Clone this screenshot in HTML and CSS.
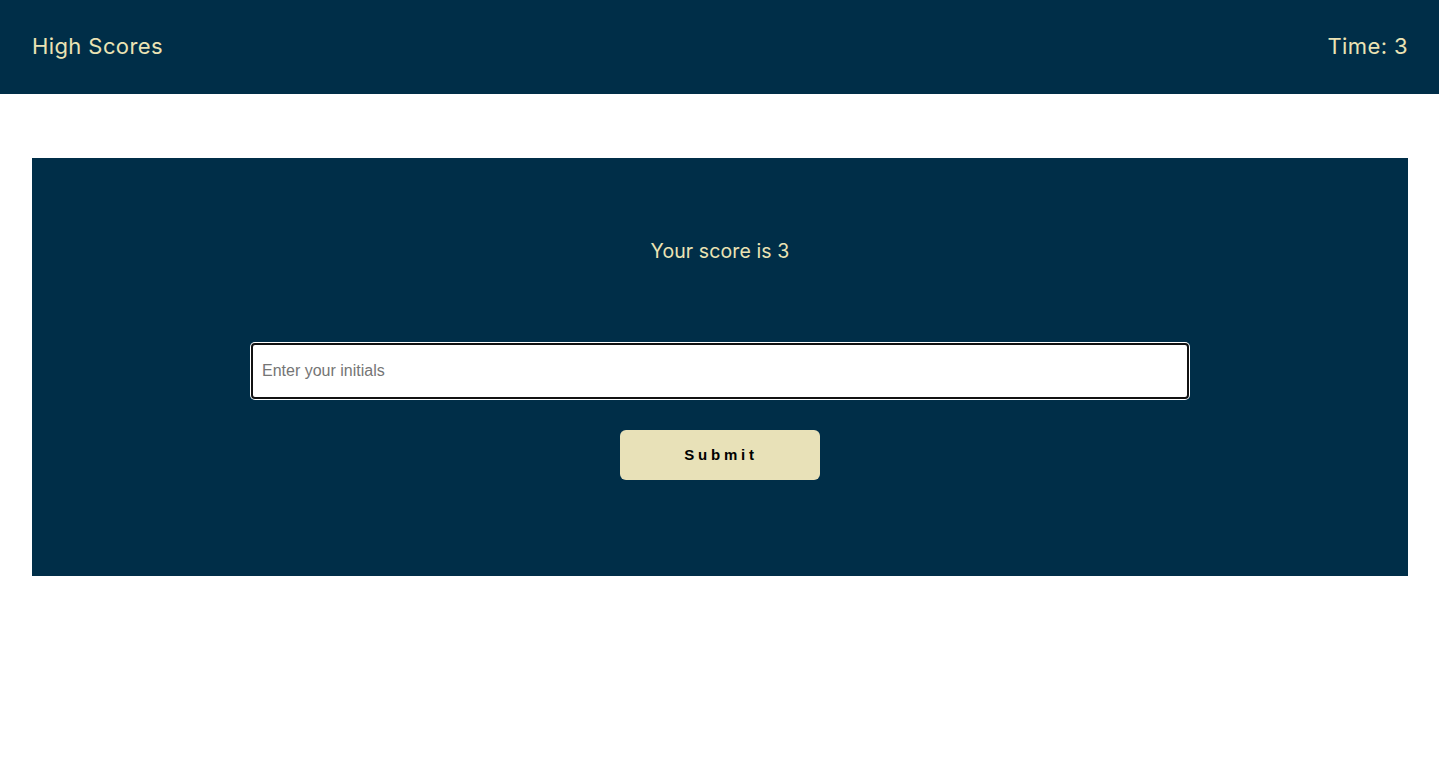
FILE: index.html
```html
<!DOCTYPE html>
<html>
<head>
<meta charset="utf-8">
<link rel="stylesheet" href="styles.css">
</head>
<body>
<header class="topbar">
  <a class="topbar__link" href="#">High Scores</a>
  <span class="topbar__time">Time: 3</span>
</header>
<main class="page">
  <section class="card">
    <p class="card__score">Your score is 3</p>
    <form class="card__form">
      <input class="card__input" type="text" placeholder="Enter your initials" autofocus>
      <button class="card__button" type="button">Submit</button>
    </form>
  </section>
</main>
</body>
</html>
```
FILE: styles.css
```css
* { box-sizing: border-box; }
html, body { margin: 0; padding: 0; background: #fff; }
body { font-family: "Inter", "Open Sans", sans-serif; }

.topbar {
  height: 94px;
  background: #002e48;
  display: flex;
  align-items: center;
  justify-content: space-between;
  padding: 0 31px 2px 32px;
  color: #ebe3b4;
  font-size: 22px;
  letter-spacing: 0.4px;
}
.topbar__link { color: #ebe3b4; text-decoration: none; }
.topbar__time { color: #ebe3b4; }

.page { padding: 64px 31px 0 32px; }

.card {
  background: #002e48;
  height: 418px;
  display: flex;
  flex-direction: column;
  align-items: center;
  padding-top: 80px;
}
.card__score {
  margin: 0;
  color: #ebe3b4;
  font-size: 19.5px;
  line-height: 26px;
  letter-spacing: 0.1px;
}
.card__form {
  width: 100%;
  display: flex;
  flex-direction: column;
  align-items: center;
  margin-top: 79px;
}
.card__input {
  width: 938px;
  height: 56px;
  border: 2px solid #111;
  border-radius: 4px;
  box-shadow: 0 0 0 1px #fff;
  outline: none;
  background: #fff;
  padding: 0 9px;
  font-family: "Liberation Sans", Arial, sans-serif;
  font-size: 16px;
  color: #222;
}
.card__input::placeholder { color: #757575; }
.card__button {
  margin-top: 31px;
  width: 200px;
  height: 50px;
  border: none;
  border-radius: 6px;
  background: #e8e1b8;
  font-family: "Liberation Sans", Arial, sans-serif;
  font-weight: bold;
  font-size: 15px;
  letter-spacing: 3.8px;
  padding: 0 0 2px 2px;
  color: #000;
}
```
